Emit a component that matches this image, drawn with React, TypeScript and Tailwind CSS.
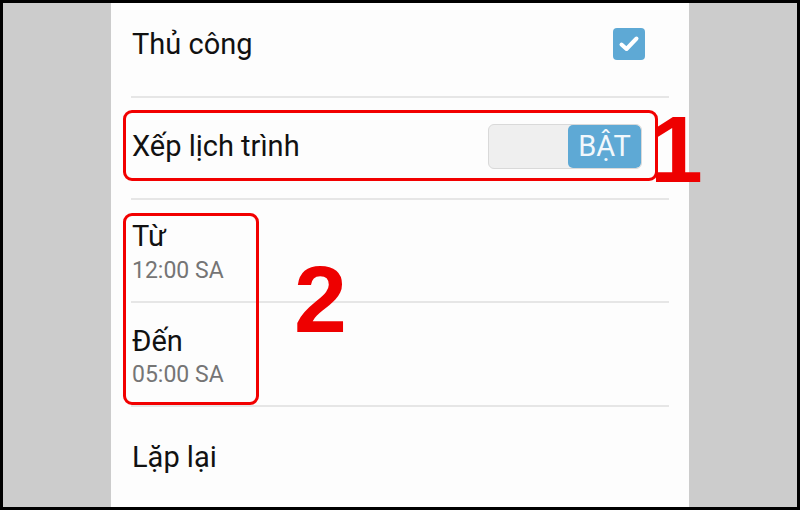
import React from 'react';

const Divider = () => <div className="mx-[20px] h-[2px] bg-[#e6e6e6]" />;

export default function App() {
  return (
    <div className="relative w-[800px] h-[510px] bg-black p-[3px] font-['Roboto',sans-serif]">
      <div className="flex h-full">
        <div className="w-[108px] bg-[#cccccc]" />
        <div className="w-[578px] bg-[#fdfdfd] flex flex-col overflow-hidden">
          {/* Thủ công */}
          <div className="h-[93px] shrink-0 flex items-center justify-between pl-[21px] pr-[44px] pb-[11px]">
            <span className="text-[29px] leading-[29px] text-[#111111]">Thủ công</span>
            <div className="w-[32px] h-[32px] rounded-[4px] bg-[#5ea9d5] flex items-center justify-center">
              <svg width="22" height="22" viewBox="0 0 22 22" fill="none">
                <path d="M3.5 11.5 L8.5 16 L18.5 5.5" stroke="#fff" strokeWidth="4" strokeLinecap="round" strokeLinejoin="round" />
              </svg>
            </div>
          </div>
          <Divider />
          {/* Xếp lịch trình */}
          <div className="h-[100px] shrink-0 flex items-center justify-between pl-[21px] pr-[47px] pb-[4px]">
            <span className="text-[29px] leading-[29px] text-[#111111]">Xếp lịch trình</span>
            <div className="w-[154px] h-[45px] flex rounded-[6px] border border-[#d9d9d9] bg-[#efefef] overflow-hidden">
              <div className="flex-1" />
              <div className="w-[73px] bg-[#5ea9d5] rounded-[5px] flex items-center justify-center text-[29px] leading-none text-[#f1f8fc]">
                BẬT
              </div>
            </div>
          </div>
          <Divider />
          {/* Từ */}
          <div className="h-[101px] shrink-0 flex flex-col pl-[21px] pt-[22px] gap-[8px]">
            <span className="text-[29px] leading-[29px] text-[#111111]">Từ</span>
            <span className="text-[23px] leading-[23px] text-[#757575]">12:00 SA</span>
          </div>
          <Divider />
          {/* Đến */}
          <div className="h-[102px] shrink-0 flex flex-col pl-[21px] pt-[24px] gap-[7px]">
            <span className="text-[29px] leading-[29px] text-[#111111]">Đến</span>
            <span className="text-[23px] leading-[23px] text-[#757575]">05:00 SA</span>
          </div>
          <Divider />
          {/* Lặp lại */}
          <div className="flex-1 pl-[21px] pt-[36px]">
            <span className="text-[29px] leading-[29px] text-[#111111]">Lặp lại</span>
          </div>
        </div>
        <div className="w-[108px] bg-[#cccccc]" />
      </div>

      {/* annotations */}
      <div className="absolute left-[123px] top-[110px] w-[535px] h-[71px] border-[3px] border-[#f20000] rounded-[9px]" />
      <div className="absolute left-[123px] top-[213px] w-[136px] h-[192px] border-[3px] border-[#f20000] rounded-[9px]" />
      <span className="absolute left-[650px] top-[102px] text-[95px] leading-[95px] font-bold text-[#ee0000] font-['Liberation_Sans',sans-serif]">1</span>
      <span className="absolute left-[294px] top-[252px] text-[95px] leading-[95px] font-bold text-[#ee0000] font-['Liberation_Sans',sans-serif]">2</span>
    </div>
  );
}
